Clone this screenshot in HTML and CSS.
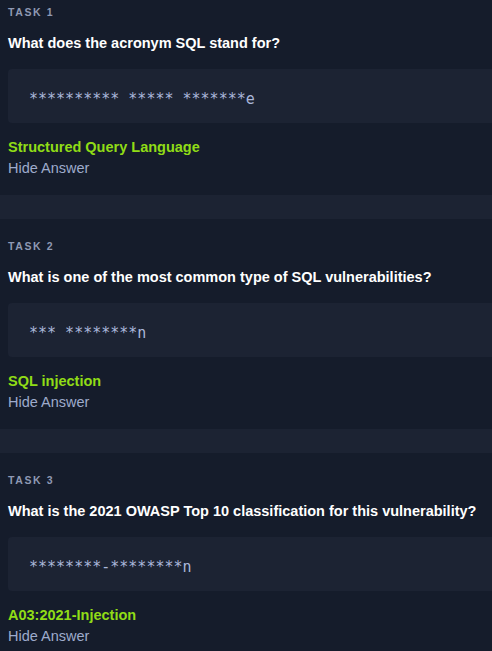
FILE: index.html
```html
<!DOCTYPE html>
<html lang="en">
<head>
<meta charset="utf-8">
<title>Tasks</title>
<link rel="stylesheet" href="styles.css">
</head>
<body>
<main class="tasks">
  <section class="task task-first">
    <div class="task-label">Task 1</div>
    <h2 class="question">What does the acronym SQL stand for?</h2>
    <div class="answer-box"><span class="mask">********** ***** *******e</span></div>
    <div class="answer">Structured Query Language</div>
    <div class="hide">Hide Answer</div>
  </section>
  <div class="band"></div>
  <section class="task">
    <div class="task-label">Task 2</div>
    <h2 class="question">What is one of the most common type of SQL vulnerabilities?</h2>
    <div class="answer-box"><span class="mask">*** ********n</span></div>
    <div class="answer">SQL injection</div>
    <div class="hide">Hide Answer</div>
  </section>
  <div class="band"></div>
  <section class="task">
    <div class="task-label">Task 3</div>
    <h2 class="question">What is the 2021 OWASP Top 10 classification for this vulnerability?</h2>
    <div class="answer-box"><span class="mask">********-********n</span></div>
    <div class="answer">A03:2021-Injection</div>
    <div class="hide">Hide Answer</div>
  </section>
</main>
</body>
</html>
```

FILE: styles.css
```css
html, body {
  margin: 0;
  padding: 0;
  background: #151c2b;
}
body {
  font-family: "Liberation Sans", Arial, sans-serif;
  color: #ffffff;
  width: 492px;
  overflow: hidden;
}
.tasks {
  display: flex;
  flex-direction: column;
}
.task {
  display: flex;
  flex-direction: column;
  padding: 20px 0 17px 8px;
}
.task-first {
  padding-top: 5px;
}
.task-label {
  font-size: 10.5px;
  line-height: 14px;
  font-weight: 700;
  text-transform: uppercase;
  letter-spacing: 1.6px;
  color: #8e99b3;
}
.question {
  margin: 14px 0 0;
  font-size: 14.5px;
  line-height: 20px;
  font-weight: 700;
  color: #ffffff;
}
.answer-box {
  margin-top: 16px;
  height: 54px;
  display: flex;
  align-items: center;
  padding-left: 21px;
  background: #1c2333;
  border-radius: 4px 0 0 4px;
}
.mask {
  font-family: "DejaVu Sans Mono", "Liberation Mono", monospace;
  font-size: 15px;
  line-height: 17px;
  color: #aab7da;
  white-space: pre;
  padding-top: 6px;
}
.answer {
  margin-top: 14px;
  font-size: 14.5px;
  line-height: 20px;
  font-weight: 700;
  color: #90dc16;
}
.hide {
  margin-top: 1px;
  font-size: 14.5px;
  line-height: 20px;
  color: #9eabcc;
}
.band {
  height: 24px;
  background: #1c2333;
}
```
